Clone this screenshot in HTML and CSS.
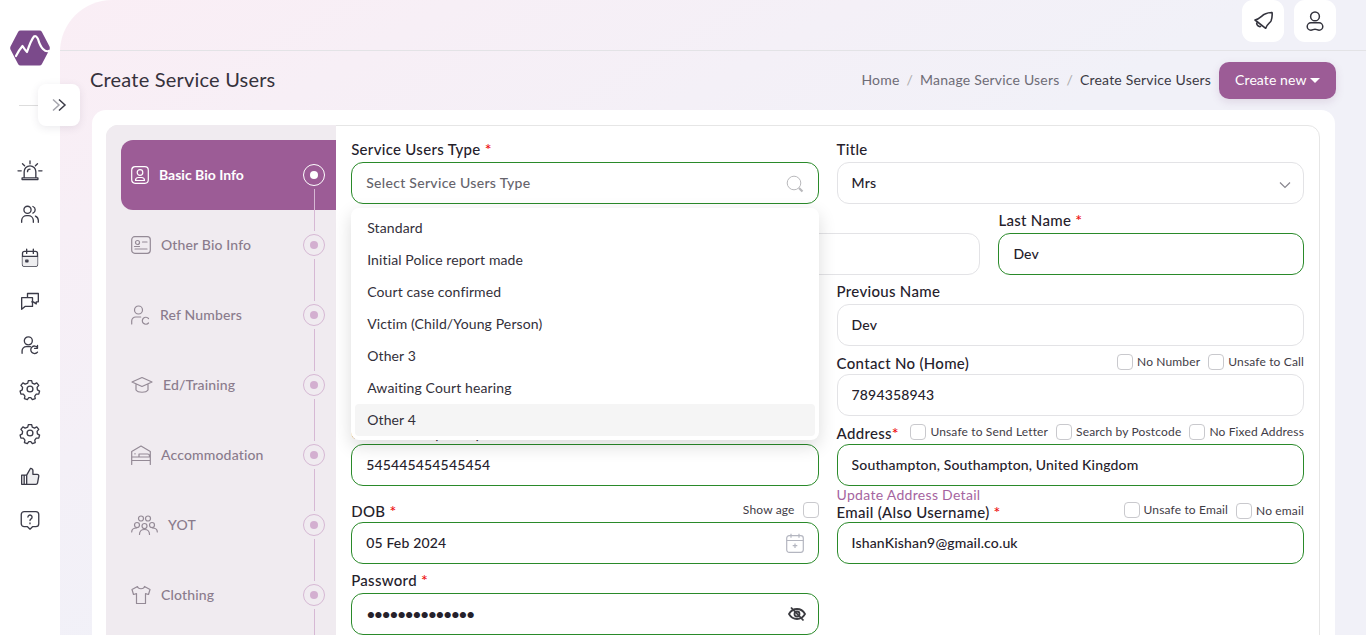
FILE: index.html
```html
<!DOCTYPE html>
<html lang="en">

<head>
  <meta charset="UTF-8">
  <meta name="viewport" content="width=device-width, initial-scale=1.0">
  <title>Create Service Users</title>
  <link rel="stylesheet" href="styles.css">
</head>

<body>
  <div class="layout">
    <!-- left rail -->
    <aside class="rail">
      <svg class="logo" viewBox="0 0 40 36">
        <path d="M10.500 0.500h19q1.500 0 2.300 1.300l7.700 14.700q.6 1.500 0 3l-7.700 14.700q-.8 1.300-2.300 1.300h-19q-1.500 0-2.300-1.300l-7.700-14.700q-.6-1.500 0-3l7.700-14.700q.8-1.300 2.300-1.300z" fill="#7b4a8b" />
        <path d="M6 26q3-6 6.500-10 2.500 4 4.500 6 4-12 7-15.500 2-1.500 4 2.500 2 7 5 10 3 3 5.500 2" fill="none" stroke="#fff" stroke-width="2.200" stroke-linejoin="round" stroke-linecap="round" />
      </svg>
      <div class="rail-line"></div>
      <nav class="rail-nav">
        <svg viewBox="0 0 24 24"><path d="M5 21.500v-7.500a7 7 0 0 1 14 0v7.500M2.500 21.500h19v2h-19zM9 14a3 3 0 0 1 3-3M12 1v3.500M3 4.500l2.500 2.500M21 4.500 18.500 7M-2.400 13H1.500M22.500 13h3.900" /></svg>
        <svg viewBox="0 0 24 24"><circle cx="9" cy="7" r="4.300" /><path d="M2 22v-2.500a6 6 0 0 1 6-5.500h2a6 6 0 0 1 6 5.500V22M15.500 3a4.300 4.300 0 0 1 0 8M18.500 14.500a6 6 0 0 1 3.500 5V22" /></svg>
        <svg viewBox="0 0 24 24"><rect x="3" y="4" width="18" height="18" rx="2.500" /><path class="fill" d="M3 10h18v9.500a2.500 2.500 0 0 1-2.500 2.500h-13a2.500 2.500 0 0 1-2.500-2.500z" /><path d="M3 10h18M8 1.500v5M16 1.500v5M7 14.500h2.500v2H7z" /></svg>
        <svg viewBox="0 0 24 24"><path d="M9 8V3h13v10h-2.500l0 2.500-3.500-2.500h-2M9 8H2v14l4-3.500h9V8z" /></svg>
        <svg viewBox="0 0 24 24"><circle cx="10" cy="7" r="4.800" /><path d="M2.500 22v-3a5 5 0 0 1 5-5h5M21 15a4.500 4.500 0 1 0 0 5.500M21 12.500V16h-3.500" /></svg>
        <svg viewBox="0 0 24 24"><circle cx="12" cy="12" r="3.500" /><path d="M10 2h4l.7 3 2.700 1.200 2.700-1.500 2.400 3-2 2.400.4 2.900 2.600 1.500-1 3.600-3 .1-1.800 2.300.6 3-3.500 1.300-1.800-2.500h-2.400l-1.800 2.500-3.500-1.300.6-3-1.800-2.300-3-.1-1-3.600 2.600-1.500.4-2.900-2-2.400 2.400-3 2.700 1.500L9.300 5z" /></svg>
        <svg viewBox="0 0 24 24"><circle cx="12" cy="12" r="3.500" /><path d="M10 2h4l.7 3 2.700 1.200 2.700-1.500 2.400 3-2 2.400.4 2.900 2.600 1.500-1 3.600-3 .1-1.800 2.300.6 3-3.500 1.300-1.800-2.500h-2.400l-1.800 2.500-3.500-1.300.6-3-1.800-2.300-3-.1-1-3.600 2.600-1.500.4-2.900-2-2.400 2.400-3 2.700 1.500L9.300 5z" /></svg>
        <svg viewBox="0 0 24 24"><path class="fill" d="M8 11l4.500-8a2.500 2.500 0 0 1 3 2.500V10h5a2 2 0 0 1 2 2.500l-1.500 8a2 2 0 0 1-2 1.500H8z" /><path d="M8 11l4.500-8a2.500 2.500 0 0 1 3 2.500V10h5a2 2 0 0 1 2 2.500l-1.500 8a2 2 0 0 1-2 1.500H8zM8 11H2v11h6M5 11v11" /></svg>
        <svg viewBox="0 0 24 24"><path d="M5 2h14a3.500 3.500 0 0 1 3.500 3.500v11A3.500 3.500 0 0 1 19 20h-4l-3 3-3-3H5a3.500 3.500 0 0 1-3.500-3.500v-11A3.500 3.500 0 0 1 5 2zM9.500 8.500a2.500 2.500 0 1 1 3.800 2.200c-.9.500-1.300 1-1.300 2M12 15.500v1" /></svg>
      </nav>
    </aside>

    <button class="rail-toggle" type="button">
      <svg viewBox="0 0 16 14"><path class="faint" d="M2 1.500l6 5.500-6 5.500" /><path d="M8 1.500l6 5.500-6 5.500" /></svg>
    </button>

    <main class="main">
      <div class="topbar">
        <button class="top-btn" type="button">
          <svg viewBox="0 0 22 22"><path d="M3 10C8 9 10 5 13 4c2-1 5-1.500 7-1.500.5 2.500 0 5.500-1 8.500-1 2-4 3-5.300 7.300zM4.700 13c-.2 2 1.800 4 3.800 3.500" /></svg>
        </button>
        <button class="top-btn" type="button">
          <svg viewBox="0 0 24 24"><circle cx="12" cy="7" r="4.800" /><path d="M7.500 14h9a4 4 0 0 1 0 8c-2 0-2.800-1-4.500-1s-2.500 1-4.500 1a4 4 0 0 1 0-8z" /></svg>
        </button>
      </div>

      <div class="page-head">
        <h1>Create Service Users</h1>
        <div class="crumbs">
          <span>Home</span><i>/</i><span>Manage Service Users</span><i>/</i><span class="current">Create Service Users</span>
        </div>
        <button class="create-btn" type="button">Create new <b></b></button>
      </div>

      <div class="card">
        <div class="card-inner">
          <!-- wizard steps -->
          <ul class="steps">
            <li class="step active">
              <svg class="w18" viewBox="0 0 18 18"><rect x=".7" y=".7" width="16.600" height="16.600" rx="3.500" /><circle cx="9" cy="6.500" r="2.800" /><path d="M4.500 14.500c0-2 1.500-3 3-3h3c1.500 0 3 1 3 3z" /></svg>
              <span>Basic Bio Info</span><em></em>
            </li>
            <li class="step">
              <svg class="w20" viewBox="0 0 20 18"><rect x=".7" y=".7" width="18.600" height="16.600" rx="3" /><circle cx="6.500" cy="6.500" r="2" /><path d="M4 13h12M11.500 6h4.500M3.500 10.500h5" /></svg>
              <span>Other Bio Info</span><em></em>
            </li>
            <li class="step">
              <svg class="w19" viewBox="0 0 19 20"><circle cx="7.500" cy="5" r="4" /><path d="M.7 19v-3a4 4 0 0 1 4-4h5M17.500 13.500a3.500 3.500 0 1 0 0 4.500" /></svg>
              <span>Ref Numbers</span><em></em>
            </li>
            <li class="step">
              <svg class="w22" viewBox="0 0 22 18"><path d="M11 1.500 21 6l-10 4.500L1 6zM5 8.500V14c2 3 10 3 12 0V8.500" /></svg>
              <span>Ed/Training</span><em></em>
            </li>
            <li class="step">
              <svg class="w20" viewBox="0 0 20 20"><path d="M.7 19.500V6.500L10 1l9.300 5.500v13M.7 15.500h18.600M4 8.500v.5M8 11.500V9h8.500a2 2 0 0 1 2 2v1M.7 12h18.600" /></svg>
              <span>Accommodation</span><em></em>
            </li>
            <li class="step">
              <svg class="w27" viewBox="0 0 27 20"><circle cx="10" cy="3.500" r="2.500" /><circle cx="17" cy="3.500" r="2.500" /><circle cx="6" cy="10" r="2.500" /><circle cx="13.500" cy="11" r="2.500" /><circle cx="21" cy="10" r="2.500" /><path d="M.7 17c0-3 2-4 5-4M26.300 17c0-3-2-4-5-4M8.500 19.500c0-3 2-5 5-5s5 2 5 5" /></svg>
              <span>YOT</span><em></em>
            </li>
            <li class="step">
              <svg class="w20" viewBox="0 0 20 19"><path d="M6.500 1 1 4l1.500 5 3-.8V18h9V8.200l3 .8L19 4l-5.500-3c-.5 3-6.500 3-7 0z" /></svg>
              <span>Clothing</span><em></em>
            </li>
          </ul>

          <form class="form">
            <div class="field half">
              <div class="field-head"><label>Service Users Type <s>*</s></label></div>
              <div class="control">
                <input class="input valid hint" type="text" placeholder="Select Service Users Type">
                <svg class="icon-right search" viewBox="0 0 18 18"><circle cx="8" cy="8" r="6.800" /><path class="thick" d="M13 13l3.500 3.500" /></svg>
                <ul class="dropdown">
                  <li>Standard</li>
                  <li>Initial Police report made</li>
                  <li>Court case confirmed</li>
                  <li>Victim (Child/Young Person)</li>
                  <li>Other 3</li>
                  <li>Awaiting Court hearing</li>
                  <li class="hover">Other 4</li>
                </ul>
              </div>
            </div>
            <div class="field half">
              <div class="field-head"><label>Title</label></div>
              <div class="control">
                <input class="input" type="text" value="Mrs">
                <svg class="icon-right chevron" viewBox="0 0 12 8"><path d="M1 1.500l5 5 5-5" /></svg>
              </div>
            </div>

            <div class="field third">
              <div class="field-head"></div>
              <input class="input" type="text">
            </div>
            <div class="field third">
              <div class="field-head"></div>
              <input class="input" type="text">
            </div>
            <div class="field third">
              <div class="field-head"><label>Last Name <s>*</s></label></div>
              <input class="input valid" type="text" value="Dev">
            </div>

            <div class="field half">
              <div class="field-head"></div>
              <input class="input" type="text">
            </div>
            <div class="field half">
              <div class="field-head"><label>Previous Name</label></div>
              <input class="input" type="text" value="Dev">
            </div>

            <div class="field half">
              <div class="field-head short"></div>
              <input class="input" type="text">
            </div>
            <div class="field half">
              <div class="field-head short">
                <label>Contact No (Home)</label>
                <div class="checks">
                  <span class="check"><i></i>No Number</span>
                  <span class="check"><i></i>Unsafe to Call</span>
                </div>
              </div>
              <input class="input" type="text" value="7894358943">
            </div>

            <div class="field half">
              <div class="field-head short"><label>Contact No (Work)</label></div>
              <input class="input valid" type="text" value="545445454545454">
            </div>
            <div class="field half">
              <div class="field-head short">
                <label>Address<s>*</s></label>
                <div class="checks">
                  <span class="check"><i></i>Unsafe to Send Letter</span>
                  <span class="check"><i></i>Search by Postcode</span>
                  <span class="check"><i></i>No Fixed Address</span>
                </div>
              </div>
              <input class="input valid" type="text" value="Southampton, Southampton, United Kingdom">
              <a class="update-link" href="#">Update Address Detail</a>
            </div>

            <div class="field half">
              <div class="field-head shorter">
                <label class="up">DOB <s>*</s></label>
                <div class="checks">
                  <span class="check flip">Show age<i></i></span>
                </div>
              </div>
              <div class="control">
                <input class="input valid" type="text" value="05 Feb 2024">
                <svg class="icon-right calendar" viewBox="0 0 18 20"><rect x=".7" y="2.700" width="16.600" height="16.600" rx="2.500" /><path d="M.7 7.500h16.600M5 .7v4M13 .7v4M9 10.500v4.500M6.700 12.700h4.600" /></svg>
              </div>
            </div>
            <div class="field half">
              <div class="field-head shorter">
                <label>Email (Also Username) <s>*</s></label>
                <div class="checks">
                  <span class="check"><i></i>Unsafe to Email</span>
                  <span class="check low"><i></i>No email</span>
                </div>
              </div>
              <input class="input valid" type="text" value="IshanKishan9@gmail.co.uk">
            </div>

            <div class="field half">
              <div class="field-head"><label>Password <s>*</s></label></div>
              <div class="control">
                <input class="input valid pass" type="password" value="Service@user12">
                <svg class="icon-right eye" viewBox="0 0 18 16"><path d="M1 8c2-3.500 5-5 8-5s6 1.500 8 5c-2 3.500-5 5-8 5S3 11.500 1 8z" /><circle cx="9" cy="8" r="2.500" /><path d="M3 1.500l12.500 13" /></svg>
              </div>
            </div>
          </form>
        </div>
      </div>
    </main>
  </div>
</body>

</html>
```

FILE: styles.css
```css
* {
  box-sizing: border-box;
}

html,
body {
  margin: 0;
  height: 100%;
  overflow: hidden;
}

body {
  background-color: #fff;
  color: #25212b;
  font-family: "Lato", "Noto Sans", sans-serif;
  font-size: 15px;
}

ul {
  list-style: none;
  margin: 0;
  padding: 0;
}

.layout {
  display: flex;
  height: 100vh;
  position: relative;
}

/* left rail */
.rail {
  width: 60px;
  flex: none;
  background-color: #fff;
  display: flex;
  flex-direction: column;
  align-items: center;
  padding-top: 30px;
}

.logo {
  width: 40px;
  height: 36px;
}

.rail-line {
  width: 22px;
  height: 1px;
  background-color: #ddd;
  margin-top: 39px;
}

.rail-nav {
  display: flex;
  flex-direction: column;
  align-items: center;
  gap: 23.750px;
  margin-top: 54px;
}

.rail-nav svg {
  width: 20px;
  height: 20px;
  overflow: visible;
  fill: none;
  stroke: #3b3b48;
  stroke-width: 1.600;
  stroke-linejoin: round;
  stroke-linecap: round;
}

.rail-nav .fill {
  fill: #eeeef0;
  stroke: none;
}

.rail-toggle {
  position: absolute;
  left: 38px;
  top: 84px;
  width: 42px;
  height: 42px;
  border: none;
  border-radius: 8px;
  background-color: #fff;
  box-shadow: 0 2px 8px rgba(60, 50, 80, .1);
  padding: 0;
  display: flex;
  align-items: center;
  justify-content: center;
}

.rail-toggle svg {
  width: 16px;
  height: 14px;
  fill: none;
  stroke: #3b3b48;
  stroke-width: 1.500;
}

.rail-toggle .faint {
  stroke: #a5a5ad;
}

/* main area */
.main {
  flex: 1;
  min-width: 0;
  border-top-left-radius: 52px;
  background: linear-gradient(150deg, #faeef5 0, #f1f1f8 50%);
  padding: 0 30px;
}

.topbar {
  height: 51px;
  margin: 0 -30px;
  padding-right: 30px;
  border-bottom: 1px solid #e3e3e6;
  display: flex;
  justify-content: flex-end;
  gap: 10px;
}

.top-btn {
  width: 42px;
  height: 42px;
  border: none;
  border-radius: 11px;
  background-color: #fff;
  padding: 0;
  display: flex;
  align-items: center;
  justify-content: center;
}

.top-btn svg {
  width: 22px;
  height: 22px;
  fill: none;
  stroke: #33333d;
  stroke-width: 1.600;
  stroke-linejoin: round;
  stroke-linecap: round;
}

.page-head {
  height: 37px;
  margin-top: 11px;
  display: flex;
  align-items: center;
}

.page-head h1 {
  margin: 0 auto 4px 0;
  font-size: 20px;
  font-weight: 400;
  letter-spacing: .2px;
  color: #36323c;
}

.crumbs {
  font-size: 14px;
  letter-spacing: .2px;
  color: #6e6c76;
  margin: 0 8px 2px 0;
}

.crumbs i {
  font-style: normal;
  color: #aaa;
  margin: 0 7px;
}

.crumbs .current {
  color: #3c3a44;
}

.create-btn {
  width: 117px;
  height: 37px;
  border: none;
  border-radius: 10px;
  background-color: #9c5c96;
  box-shadow: 0 3px 8px rgba(120, 70, 120, .15);
  color: #fff;
  font: inherit;
  font-size: 14px;
  letter-spacing: .1px;
  padding-bottom: 4px;
}

.create-btn b {
  display: inline-block;
  border: 5px solid transparent;
  border-top-color: #fff;
  border-bottom: none;
  vertical-align: middle;
}

/* card */
.card {
  margin: 11px 1px 0 2px;
  padding: 15px 15px 0 14px;
  background-color: #fff;
  border-radius: 14px 14px 0 0;
  height: 600px;
}

.card-inner {
  display: flex;
  height: 100%;
  border: 1px solid #e6e6e6;
  border-radius: 12px 12px 0 0;
}

/* steps */
.steps {
  width: 230px;
  flex: none;
  margin: -1px 0 0 -1px;
  padding: 15px 0 0 15px;
  background-color: #f0ebf0;
  border-top-left-radius: 12px;
}

.step {
  height: 70px;
  display: flex;
  align-items: center;
  gap: 10px;
  padding: 0 11px 0 10px;
  position: relative;
  color: #8a7b8c;
  font-size: 14px;
  font-weight: 500;
  letter-spacing: .15px;
}

.step svg {
  flex: none;
  height: 20px;
  fill: none;
  stroke: #948a96;
  stroke-width: 1.200;
  stroke-linejoin: round;
  stroke-linecap: round;
}

.w18 {
  width: 18px;
}

.w19 {
  width: 19px;
}

.w20 {
  width: 20px;
}

.w22 {
  width: 22px;
}

.w27 {
  width: 27px;
}

.step span {
  flex: 1;
  padding-bottom: 2px;
}

.step em {
  width: 22px;
  height: 22px;
  flex: none;
  border: 1px solid #d6b8d4;
  border-radius: 50%;
  display: flex;
  align-items: center;
  justify-content: center;
}

.step em::before {
  content: "";
  width: 8px;
  height: 8px;
  border-radius: 50%;
  background-color: #d3afd0;
}

.step::after {
  content: "";
  position: absolute;
  right: 21px;
  top: 49px;
  width: 1px;
  height: 42px;
  background-color: #d6b8d4;
}

.step.active {
  background-color: #9c5c96;
  border-radius: 12px 0 0 12px;
  color: #fff;
  font-weight: 700;
  letter-spacing: 0;
}

.step.active svg {
  stroke: #fff;
}

.step.active em {
  border-color: #fff;
}

.step.active em::before {
  background-color: #fff;
}

/* form */
.form {
  flex: 1;
  min-width: 0;
  padding: 14px 15px 0 15.200px;
  display: grid;
  grid-template-columns: repeat(6, 1fr);
  column-gap: 18px;
  row-gap: 7px;
  align-content: start;
}

.half {
  grid-column: span 3;
}

.third {
  grid-column: span 2;
}

.field-head {
  height: 22px;
  display: flex;
  justify-content: space-between;
  gap: 8px;
  line-height: 20px;
}

.field-head.short {
  height: 21px;
}

.field-head.shorter {
  height: 20px;
}

.field-head label {
  font-size: 15px;
  font-weight: 500;
  letter-spacing: .3px;
  white-space: nowrap;
  margin-top: -1px;
}

.field-head.short label,
.field-head.shorter label {
  margin-top: 0;
}

.field-head.shorter label.up {
  margin-top: -1px;
}

.field-head s {
  text-decoration: none;
  color: #e11;
  font-size: 16px;
}

.checks {
  display: flex;
  gap: 8px;
  font-size: 12px;
  letter-spacing: .15px;
  color: #3f3c46;
  margin-top: -3px;
}

.shorter .checks {
  margin-top: -4px;
}

.check {
  display: flex;
  align-items: center;
  gap: 4px;
  white-space: nowrap;
}

.check i {
  width: 16px;
  height: 16px;
  border: 1px solid #c9c9cd;
  border-radius: 4px;
  background-color: #fff;
}

.check.flip {
  gap: 8px;
}

.check.low {
  margin-top: 2px;
}

.control {
  position: relative;
}

.input {
  display: block;
  width: 100%;
  height: 42px;
  padding: 0 14px 2px;
  border: 1px solid #e3e3e6;
  border-radius: 12px;
  background-color: #fff;
  color: #25212b;
  font: inherit;
  font-size: 14px;
  font-weight: 500;
  letter-spacing: .15px;
  outline: none;
}

.input::placeholder {
  color: #66646c;
  opacity: 1;
}

.input.hint {
  letter-spacing: .3px;
}

.input.valid {
  border-color: #2a8a2a;
}

.input.pass {
  font-size: 16px;
  letter-spacing: -1.600px;
}

.icon-right {
  position: absolute;
  fill: none;
}

.search {
  right: 15px;
  top: 13px;
  width: 18px;
  height: 18px;
  stroke: #b9b9bc;
  stroke-width: 1;
}

.search .thick {
  stroke-width: 2.200;
}

.chevron {
  right: 13px;
  top: 19px;
  width: 12px;
  height: 8px;
  stroke: #88868e;
  stroke-width: 1.200;
}

.calendar {
  right: 15px;
  top: 11px;
  width: 18px;
  height: 20px;
  stroke: #b4b6c0;
  stroke-width: 1.200;
}

.eye {
  right: 13px;
  top: 13px;
  width: 18px;
  height: 16px;
  stroke: #3b3b40;
  stroke-width: 1.800;
}

.update-link {
  display: block;
  height: 18px;
  line-height: 18px;
  margin-bottom: -9px;
  color: #a564a0;
  font-size: 14px;
  letter-spacing: .3px;
  text-decoration: none;
}

/* open dropdown */
.dropdown {
  position: absolute;
  z-index: 5;
  left: 0;
  right: 0;
  top: 46px;
  height: 232px;
  padding: 4px;
  background-color: #fff;
  border-radius: 8px;
  box-shadow: 0 6px 18px rgba(0, 0, 0, .14);
  font-size: 14px;
  letter-spacing: .12px;
}

.dropdown li {
  height: 32px;
  line-height: 32px;
  padding-left: 12px;
  border-radius: 4px;
  color: #33303a;
}

.dropdown .hover {
  background-color: #f5f5f5;
}
```
